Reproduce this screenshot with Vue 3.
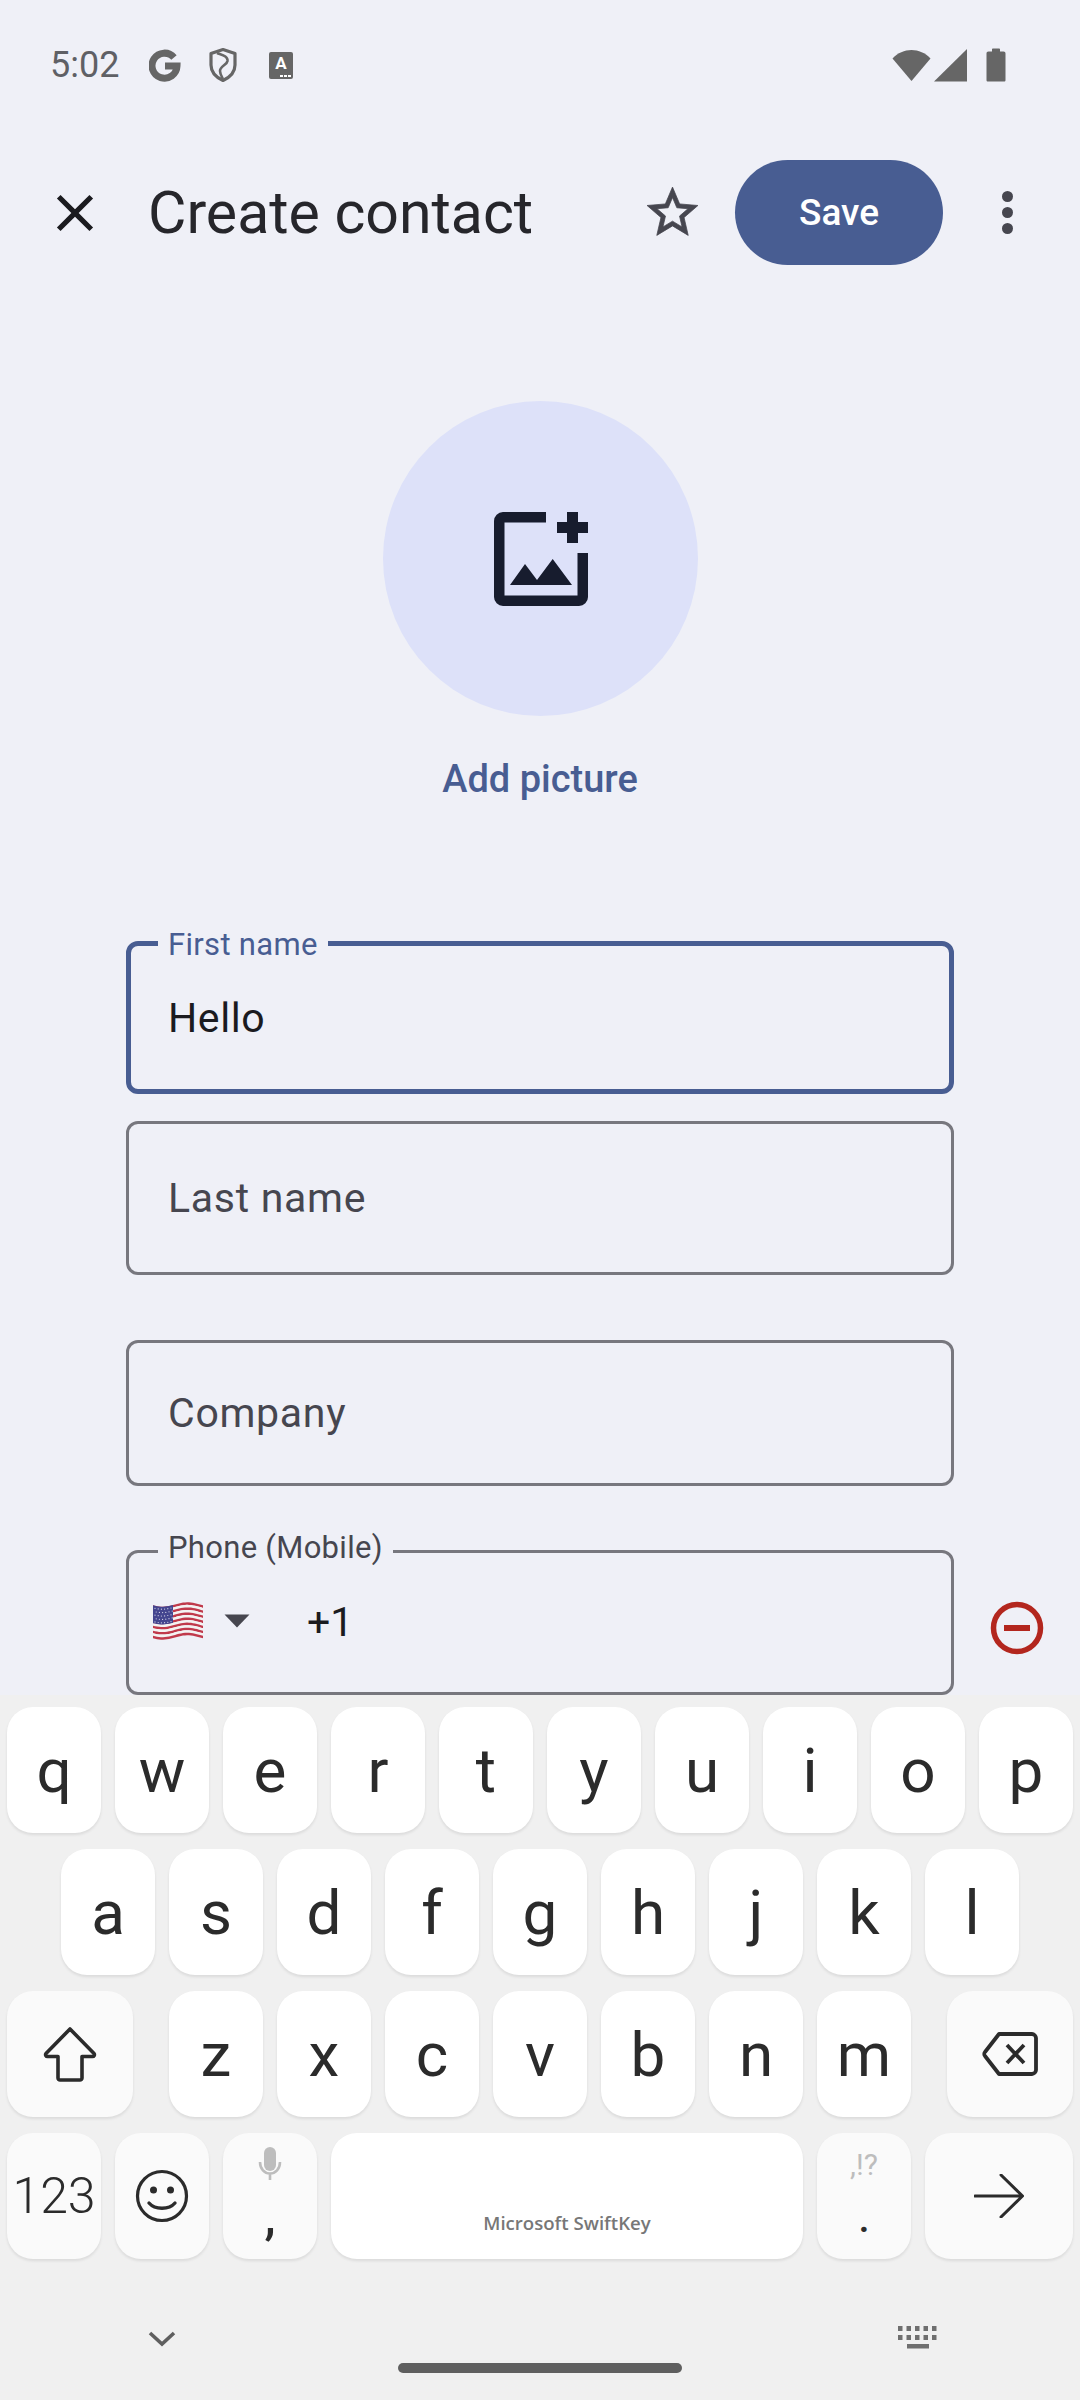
<script setup>
const row1 = ['q','w','e','r','t','y','u','i','o','p']
const row2 = ['a','s','d','f','g','h','j','k','l']
const row3 = ['z','x','c','v','b','n','m']

const wave = (x) => 2.2 * Math.sin((x / 50) * Math.PI * 2 + 0.4)
const ribbon = (x0, x1, y0, y1) => {
  const top = []
  const bottom = []
  for (let x = x0; x <= x1; x += 2) {
    top.push(`${x},${(y0 + wave(x)).toFixed(2)}`)
    bottom.unshift(`${x},${(y1 + wave(x)).toFixed(2)}`)
  }
  return 'M' + top.concat(bottom).join('L') + 'Z'
}
const stripeH = 33 / 13
const stripes = Array.from({ length: 13 }, (_, i) => ({
  d: ribbon(0, 50, 2.5 + i * stripeH, 2.5 + (i + 1) * stripeH),
  fill: i % 2 === 0 ? '#c0394b' : '#f4f2f2'
}))
const canton = ribbon(0, 20, 2.5, 2.5 + 7 * stripeH)
const stars = []
for (let r = 0; r < 5; r++) {
  for (let c = 0; c < 6; c++) {
    const x = 2 + c * 3.2 + (r % 2 ? 1.2 : 0)
    stars.push({ x, y: 5 + r * 3.4 + wave(x) })
  }
}
</script>

<template>
  <div class="screen">
    <div class="status">
      <span class="time">5:02</span>
      <svg class="st-g" width="32" height="34" viewBox="0 0 32 34" fill="none">
        <path d="M25 9.500A12.500 12.500 0 1 0 28 18H16" stroke="#666" stroke-width="7" />
      </svg>
      <svg class="st-shield" width="30" height="36" viewBox="0 0 30 36" fill="none">
        <path d="M15 2.500 27 6.500V18C27 25.500 21.500 30.500 15 33.500 8.500 30.500 3 25.500 3 18V6.500Z" stroke="#666" stroke-width="3.200" stroke-linejoin="round" />
        <path d="M9 6C14 8 20 9 19.500 14 19 18 12 19 12 24 12 27 14 30 15 32" stroke="#666" stroke-width="2.600" />
      </svg>
      <div class="st-a">
        <span>A</span>
        <i class="st-dots"></i>
      </div>
      <div class="status-right">
        <svg width="39" height="34" viewBox="0 0 38 34" preserveAspectRatio="none">
          <path d="M0.500 10.500C10.500 -1 27.500 -1 37.500 10.500L19 33Z" fill="#666" />
        </svg>
        <svg class="st-signal" width="33" height="34" viewBox="0 0 32 34" preserveAspectRatio="none">
          <path d="M32 1V33.500H0Z" fill="#666" />
        </svg>
        <svg class="st-batt" width="20" height="34" viewBox="0 0 20 34">
          <path d="M6 1.500C6 .8 6.500 .5 7 .5H13C13.500 .5 14 .8 14 1.500V3.500H17.500C18.800 3.500 19.500 4.300 19.500 5.500V32C19.500 33 19 33.500 18 33.500H2C1 33.500 .5 33 .5 32V5.500C.5 4.300 1.200 3.500 2.500 3.500H6Z" fill="#666" />
        </svg>
      </div>
    </div>

    <div class="appbar">
      <svg class="close" width="62" height="62" viewBox="0 0 24 24">
        <path d="M19 6.410 17.590 5 12 10.590 6.410 5 5 6.410 10.590 12 5 17.590 6.410 19 12 13.410 17.590 19 19 17.590 13.410 12z" fill="#1b1b1f" />
      </svg>
      <h1 class="title">Create contact</h1>
      <svg class="star" width="61" height="61" viewBox="0 0 24 24">
        <path d="M22 9.240l-7.190-.62L12 2 9.190 8.630 2 9.240l5.460 4.730L5.820 21 12 17.270 18.180 21l-1.630-7.030L22 9.240zM12 15.400l-3.760 2.270 1-4.280-3.320-2.880 4.380-.38L12 6.100l1.710 4.040 4.380.38-3.320 2.880 1 4.280L12 15.400z" fill="#46464f" stroke="#46464f" stroke-width=".3" />
      </svg>
      <div class="save">Save</div>
      <div class="more"><i></i><i></i><i></i></div>
    </div>

    <div class="avatar">
      <svg width="94" height="94" viewBox="0 0 94 94">
        <path d="M52 0H9A9 9 0 0 0 0 9V85A9 9 0 0 0 9 94H85A9 9 0 0 0 94 85V41H83.500V83.500H10.500V10.500H52Z" fill="#171c2e" />
        <path d="M73 0H84V10H94V21H84V31H73V21H63V10H73Z" fill="#171c2e" />
        <path d="M16 73 31 52 43 68 58.700 47 78 73Z" fill="#171c2e" />
      </svg>
    </div>
    <div class="add-pic">Add picture</div>

    <div class="fields">
      <div class="field focused">
        <span class="float blue">First name</span>
        <span class="value">Hello</span>
      </div>
      <div class="field last">
        <span class="hint">Last name</span>
      </div>
      <div class="field company">
        <span class="hint">Company</span>
      </div>
      <div class="phone-row">
        <div class="field phone">
          <span class="float">Phone (Mobile)</span>
          <svg class="flag" width="50" height="40" viewBox="0 0 50 40">
            <path v-for="(s, i) in stripes" :key="i" :d="s.d" :fill="s.fill" />
            <path :d="canton" fill="#44458f" />
            <circle v-for="(s, i) in stars" :key="'s' + i" :cx="s.x" :cy="s.y" r=".6" fill="#d8d8ea" />
          </svg>
          <svg class="caret" width="26" height="14" viewBox="0 0 26 14">
            <path d="M0.500 .5H25.500L13 13.500Z" fill="#46464f" />
          </svg>
          <span class="code">+1</span>
        </div>
        <svg class="remove" width="58" height="58" viewBox="0 0 58 58" fill="none">
          <circle cx="29" cy="29" r="23.500" stroke="#b3261e" stroke-width="5.500" />
          <rect x="16" y="26" width="26" height="6" fill="#b3261e" />
        </svg>
      </div>
    </div>

    <div class="keyboard">
      <div class="row">
        <div v-for="k in row1" :key="k" class="key">{{ k }}</div>
      </div>
      <div class="row row-2">
        <div v-for="k in row2" :key="k" class="key">{{ k }}</div>
      </div>
      <div class="row">
        <div class="key wide fn">
          <svg width="56" height="56" viewBox="0 0 56 56" fill="none">
            <path d="M28 3 52 27.500C53 29 52 30.500 50.500 30.500H40V52C40 53 39 54 38 54H18C17 54 16 53 16 52V30.500H5.500C4 30.500 3 29 4 27.500Z" stroke="#2b2b2b" stroke-width="3.600" stroke-linejoin="round" />
          </svg>
        </div>
        <div class="row-mid">
          <div v-for="k in row3" :key="k" class="key">{{ k }}</div>
        </div>
        <div class="key wide fn">
          <svg width="56" height="46" viewBox="0 0 56 46" fill="none">
            <path d="M17 3H50C52 3 54 5 54 7V39C54 41 52 43 50 43H17L3 25C2 24 2 22 3 21Z" stroke="#2b2b2b" stroke-width="3.800" stroke-linejoin="round" />
            <path d="M25 14 42 32M42 14 25 32" stroke="#2b2b2b" stroke-width="3.800" />
          </svg>
        </div>
      </div>
      <div class="row">
        <div class="key fn num">123</div>
        <div class="key fn">
          <svg width="54" height="54" viewBox="0 0 54 54" fill="none">
            <circle cx="27" cy="27" r="24.500" stroke="#2b2b2b" stroke-width="3.200" />
            <circle cx="18.500" cy="21" r="3.500" fill="#2b2b2b" />
            <circle cx="35.500" cy="21" r="3.500" fill="#2b2b2b" />
            <path d="M14 34C20 41 34 41 40 34" stroke="#2b2b2b" stroke-width="3.400" stroke-linecap="round" />
          </svg>
        </div>
        <div class="key fn dual">
          <svg class="mic" width="24" height="34" viewBox="0 0 24 34" fill="none">
            <rect x="6" y="0" width="12" height="24" rx="6" fill="#bdbdbd" />
            <path d="M2 15C2 22 6.500 26.500 12 26.500 17.500 26.500 22 22 22 15M12 26V33" stroke="#bdbdbd" stroke-width="2.600" />
          </svg>
          <span class="punct comma">,</span>
        </div>
        <div class="key space"><span class="brand">Microsoft SwiftKey</span></div>
        <div class="key fn dual">
          <span class="alt">,!?</span>
          <span class="punct period">.</span>
        </div>
        <div class="key enter fn">
          <svg width="50" height="44" viewBox="0 0 50 44" fill="none">
            <path d="M1 22H48M27 1 48.500 22 27 43" stroke="#2b2b2b" stroke-width="3" stroke-linecap="round" stroke-linejoin="round" />
          </svg>
        </div>
      </div>
      <div class="nav">
        <svg class="chev" width="28" height="16" viewBox="0 0 28 16" fill="none">
          <path d="M2 2 14 13 26 2" stroke="#5f5f5f" stroke-width="3.600" />
        </svg>
        <div class="pill"></div>
        <svg class="kbd" width="42" height="24" viewBox="0 0 42 24" fill="#6f6f6f">
          <rect v-for="i in 5" :key="'a' + i" :x="1 + (i - 1) * 8.500" y="0" width="4.500" height="5" />
          <rect v-for="i in 5" :key="'b' + i" :x="1 + (i - 1) * 8.500" y="9" width="4.500" height="5" />
          <rect x="10" y="18" width="22" height="4.500" />
        </svg>
      </div>
    </div>
  </div>
</template>

<style>
body { margin: 0; background: #eff0f7; }
</style>

<style scoped>
.screen {
  width: 1080px;
  height: 2400px;
  display: flex;
  flex-direction: column;
  overflow: hidden;
  background: #eff0f7;
  font-family: Roboto, "Liberation Sans", sans-serif;
}
.status {
  height: 34px;
  margin-top: 48px;
  padding: 0 74px 0 50px;
  display: flex;
  align-items: center;
  flex: none;
}
.time { font-size: 36px; color: #5f6065; width: 99px; line-height: 34px; }
.st-shield { margin-left: 27px; }
.st-a {
  margin-left: 31px;
  width: 24px;
  height: 27px;
  background: #666;
  border-radius: 2px;
  position: relative;
  display: flex;
  justify-content: center;
  color: #fff;
  font-size: 17px;
  font-weight: 700;
  line-height: 22px;
}
.st-dots {
  position: absolute;
  right: 6px;
  bottom: 2px;
  width: 3px;
  height: 2px;
  background: #fff;
  box-shadow: 4px 0 #fff, -4px 0 #fff;
}
.status-right { margin-left: auto; display: flex; align-items: center; }
.st-signal { margin-left: 3px; }
.st-batt { margin-left: 19px; }

.appbar {
  height: 105px;
  margin-top: 78px;
  display: flex;
  align-items: center;
  flex: none;
}
.close { margin-left: 43.500px; flex: none; }
.title {
  margin: 0 0 0 42.500px;
  font-size: 59px;
  font-weight: 400;
  color: #26262b;
  width: 493.500px;
  flex: none;
  white-space: nowrap;
}
.star { flex: none; margin-right: 32.500px; }
.save {
  width: 208px;
  height: 105px;
  border-radius: 53px;
  background: #485d92;
  color: #fff;
  font-size: 37px;
  font-weight: 500;
  display: flex;
  align-items: center;
  justify-content: center;
  flex: none;
}
.more {
  margin-left: 58.500px;
  display: flex;
  flex-direction: column;
  gap: 5px;
}
.more i { width: 11px; height: 11px; border-radius: 50%; background: #46464f; }

.avatar {
  width: 315px;
  height: 315px;
  margin: 136px 0 0 383px;
  border-radius: 50%;
  background: #dde1f9;
  display: flex;
  align-items: center;
  justify-content: center;
  flex: none;
}
.add-pic {
  margin-top: 41px;
  text-align: center;
  color: #485d92;
  font-size: 38px;
  font-weight: 500;
  line-height: 44px;
  flex: none;
}

.fields {
  margin-top: 140px;
  padding-left: 126px;
  display: flex;
  flex-direction: column;
  flex: none;
}
.field {
  width: 828px;
  box-sizing: border-box;
  border: 3px solid #77777e;
  border-radius: 12px;
  position: relative;
  display: flex;
  align-items: center;
  padding-left: 39px;
}
.focused {
  height: 153px;
  border: 5px solid #485d92;
  padding-left: 37px;
}
.last { height: 154px; margin-top: 27px; }
.company { height: 146px; margin-top: 65px; }
.phone-row { margin-top: 64px; display: flex; align-items: flex-start; }
.phone { height: 145px; padding-left: 0; }
.float {
  position: absolute;
  left: 29px;
  top: -24px;
  padding: 0 10px;
  background: #eff0f7;
  color: #46464f;
  font-size: 31px;
  letter-spacing: .3px;
  line-height: 38px;
}
.focused .float { left: 27px; top: -20px; }
.blue { color: #485d92; }
.value { font-size: 41px; font-weight: 400; color: #1b1b1f; letter-spacing: .6px; }
.hint { font-size: 41px; font-weight: 400; color: #46464f; letter-spacing: .7px; }
.flag { margin-left: 24px; margin-top: -2px; flex: none; }
.caret { margin-left: 21px; margin-top: -3px; flex: none; }
.code { margin-left: 57px; margin-top: -1px; font-size: 41px; font-weight: 400; color: #1b1b1f; }
.remove { margin: 49px 0 0 34px; flex: none; }

.keyboard {
  flex: 1;
  background: #f0f0f0;
  padding: 12px 7px 0;
  display: flex;
  flex-direction: column;
  gap: 16px;
}
.row { display: flex; gap: 14px; height: 126px; flex: none; }
.row-2 { padding-left: 54px; }
.row-mid { display: flex; gap: 14px; margin: 0 22px; }
.key {
  width: 94px;
  height: 126px;
  flex: none;
  border-radius: 26px;
  background: #fff;
  box-shadow: 0 2px 3px rgba(0, 0, 0, .09);
  display: flex;
  align-items: center;
  justify-content: center;
  font-size: 62px;
  color: #2b2b2b;
  position: relative;
}
.fn { background: #fafafa; }
.wide { width: 126px; }
.num { font-size: 50px; font-weight: 300; }
.space { width: 472px; background: #fff; }
.enter { width: 148px; }
.brand {
  position: absolute;
  left: 0;
  right: 0;
  bottom: 24px;
  text-align: center;
  font-family: "Open Sans", sans-serif;
  font-size: 18.600px;
  font-weight: 600;
  color: #777;
}
.mic { position: absolute; top: 14px; left: 35px; }
.punct {
  position: absolute;
  left: 0;
  right: 0;
  top: 54px;
  text-align: center;
  font-size: 50px;
  line-height: 60px;
  font-weight: 500;
}
.period { font-size: 40px; top: 56px; }
.alt {
  position: absolute;
  left: 0;
  right: 0;
  top: 14px;
  text-align: center;
  font-size: 30px;
  line-height: 36px;
  color: #bdbdbd;
}
.nav {
  position: relative;
  height: 141px;
  margin: -16px -7px 0;
  flex: none;
}
.chev { position: absolute; left: 148px; top: 72px; }
.pill {
  position: absolute;
  left: 398px;
  top: 104px;
  width: 284px;
  height: 10px;
  border-radius: 5px;
  background: #5f5f5f;
}
.kbd { position: absolute; left: 897px; top: 67px; }
</style>
